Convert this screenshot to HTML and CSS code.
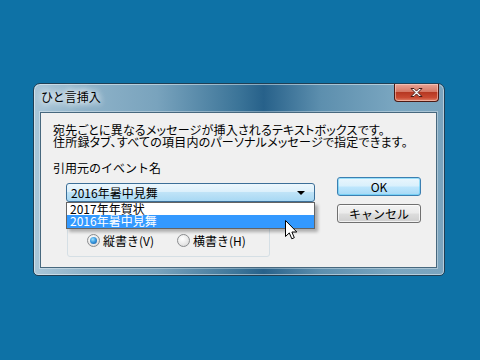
FILE: index.html
```html
<!DOCTYPE html>
<html lang="ja">
<head>
<meta charset="utf-8">
<title>ひと言挿入</title>
<link rel="stylesheet" href="styles.css">
</head>
<body>
<div class="window">
  <div class="titlebar">
    <span class="title">ひと言挿入</span>
    <div class="close">
      <svg width="15" height="11" viewBox="0 0 15 11"><path d="M2 1.5h3l2.5 2.6 2.5-2.6h3l-4 4 4 4h-3l-2.5-2.6-2.5 2.6h-3l4-4z" fill="#fff" stroke="#4a1a14" stroke-width="1" stroke-linejoin="round"/></svg>
    </div>
  </div>
  <div class="client">
    <p class="desc">宛先ごとに異なるメッセージが挿入されるテキストボックスです。<br>住所録タブ、すべての項目内のパーソナルメッセージで指定できます。</p>
    <div class="row">
      <div class="left">
        <div class="label">引用元のイベント名</div>
        <div class="combo-wrap">
          <div class="combo">
            <span>2016年暑中見舞</span>
            <span class="arrow"></span>
          </div>
          <ul class="list">
            <li>2017年年賀状</li>
            <li class="sel">2016年暑中見舞</li>
          </ul>
        </div>
        <div class="group">
          <label class="opt"><span class="radio on"></span>縦書き(V)</label>
          <label class="opt"><span class="radio"></span>横書き(H)</label>
        </div>
      </div>
      <div class="right">
        <div class="btn ok">OK</div>
        <div class="btn">キャンセル</div>
      </div>
    </div>
  </div>
</div>
<svg class="cursor" width="13" height="21" viewBox="0 0 13 21"><path d="M0.5 0.5V16.5L4.3 12.9L6.8 18.8L9.3 17.7L6.9 12H11.8Z" fill="#fff" stroke="#000" stroke-width="1" stroke-linejoin="round"/></svg>
</body>
</html>
```

FILE: styles.css
```css
html, body {
  margin: 0;
  height: 100%;
}
body {
  background: #0e72a6;
  font-family: "Noto Sans CJK JP", "DejaVu Sans", sans-serif;
  font-size: 12px;
  color: #000;
  position: relative;
  overflow: hidden;
}
.window {
  position: absolute;
  left: 33px;
  top: 83px;
  width: 412px;
  height: 193px;
  box-sizing: border-box;
  border: 1px solid #1f3f55;
  border-radius: 7px 7px 5px 5px;
  background:
    linear-gradient(90deg, #a9c6d8 0%, #8fb3c9 12%, #79a3bd 30%, #3b7498 50%, #27618a 56%, #5d8fae 70%, #7aa6c0 88%, #7ba4be 100%);
  box-shadow: inset 0 0 0 1px rgba(255,255,255,0.45);
  display: flex;
  flex-direction: column;
}
.titlebar {
  height: 28px;
  display: flex;
  align-items: flex-start;
  justify-content: space-between;
  padding-left: 7px;
}
.title {
  margin-top: 5px;
  line-height: 16px;
  font-size: 12px;
  color: #000;
  text-shadow: 0 0 6px #fff, 0 0 8px #fff, 0 0 10px rgba(255,255,255,0.8);
}
.close {
  width: 45px;
  height: 18px;
  margin-right: 5px;
  box-sizing: border-box;
  border: 1px solid #4c1a14;
  border-top: none;
  border-radius: 0 0 4px 4px;
  background: linear-gradient(180deg, #e8a496 0%, #d47865 45%, #b63822 50%, #c94a32 80%, #e0866c 100%);
  box-shadow: inset 0 0 0 1px rgba(255,220,210,0.5);
  display: flex;
  align-items: center;
  justify-content: center;
}
.close svg { display: block; }
.client {
  width: 397px;
  height: 156px;
  margin-left: 6px;
  box-sizing: border-box;
  background: #f0f0f0;
  border: 1px solid #47687e;
  box-shadow: 0 0 0 1px rgba(255,255,255,0.35);
  padding: 11px 0 0 12px;
}
.desc {
  margin: 0;
  line-height: 12px;
  white-space: nowrap;
  font-feature-settings: "palt";
  letter-spacing: 0.2px;
}
.row {
  display: flex;
  margin-top: 14px;
}
.left {
  width: 284px;
}
.label {
  line-height: 12px;
}
.combo-wrap {
  position: relative;
  margin: 9px 0 0 13px;
  width: 249px;
}
.combo {
  height: 19px;
  box-sizing: border-box;
  border: 1px solid #3c6f98;
  border-radius: 3px;
  background: linear-gradient(180deg, #ecf7fd 0%, #dcf0fb 45%, #bfe3f7 50%, #a8d8f3 100%);
  display: flex;
  align-items: center;
  justify-content: space-between;
  padding: 0 6px 0 4px;
  line-height: 17px;
}
.arrow {
  width: 0;
  height: 0;
  border-left: 4px solid transparent;
  border-right: 4px solid transparent;
  border-top: 4px solid #000;
  margin-right: 3px;
}
.list {
  position: absolute;
  left: 0;
  top: 19px;
  width: 249px;
  margin: 0;
  padding: 0;
  list-style: none;
  box-sizing: border-box;
  border: 1px solid #646464;
  background: #fff;
  box-shadow: 3px 3px 3px rgba(0,0,0,0.28);
  z-index: 2;
}
.list li {
  height: 12px;
  line-height: 12px;
  padding-left: 3px;
}
.list li.sel {
  height: 13px;
  background: #3399ff;
  color: #fff;
}
.group {
  margin: 19px 0 0 14px;
  width: 203px;
  height: 36px;
  box-sizing: border-box;
  border: 1px solid #d5dfe5;
  border-radius: 3px;
  display: flex;
  align-items: center;
  padding: 3px 0 0 19px;
  gap: 23px;
}
.opt {
  display: flex;
  align-items: center;
  gap: 3px;
  line-height: 12px;
}
.radio {
  width: 13px;
  height: 13px;
  box-sizing: border-box;
  border-radius: 50%;
  border: 1px solid #8a8c8e;
  background: radial-gradient(circle at 40% 35%, #ffffff 0%, #e9e9e9 55%, #cfcfcf 100%);
  display: flex;
  align-items: center;
  justify-content: center;
}
.radio.on::after {
  content: "";
  width: 7px;
  height: 7px;
  border-radius: 50%;
  background: radial-gradient(circle at 40% 35%, #9fe0fb 0%, #3b9be0 45%, #0d4f9a 100%);
}
.right {
  display: flex;
  flex-direction: column;
  gap: 8px;
  padding-top: 15px;
}
.btn {
  width: 84px;
  height: 19px;
  box-sizing: border-box;
  border: 1px solid #707070;
  border-radius: 3px;
  background: linear-gradient(180deg, #f2f2f2 0%, #ebebeb 48%, #dddddd 52%, #cfcfcf 100%);
  box-shadow: inset 0 0 0 1px rgba(255,255,255,0.7);
  text-align: center;
  line-height: 17px;
  font-family: "Noto Sans CJK JP", "DejaVu Sans", sans-serif;
}
.btn.ok {
  border-color: #3c7fb1;
  background: linear-gradient(180deg, #eaf6fd 0%, #d9f0fc 48%, #bee6fd 52%, #a7d9f5 100%);
  box-shadow: inset 0 0 0 1px rgba(72,200,245,0.5);
}
.cursor {
  position: absolute;
  left: 285px;
  top: 220px;
  z-index: 5;
}
```
